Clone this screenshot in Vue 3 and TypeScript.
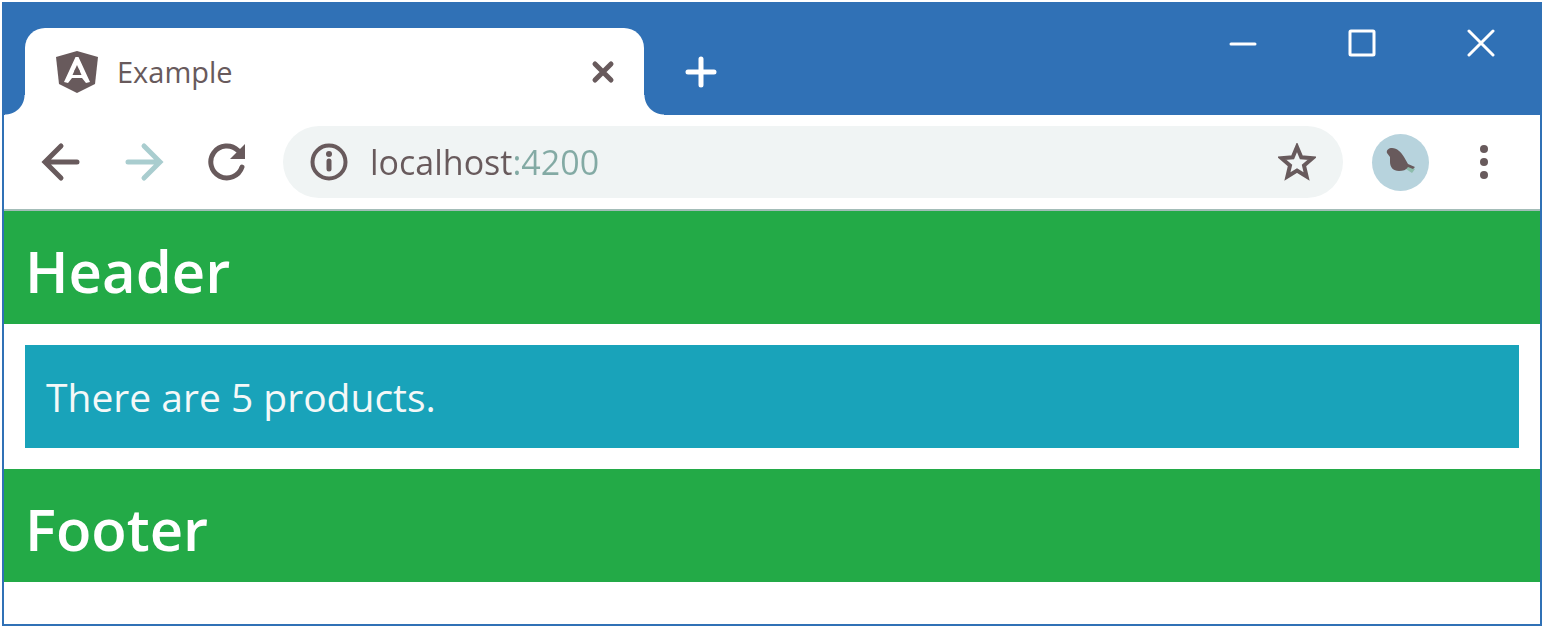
<script setup lang="ts">
import { ref } from 'vue'

const tabTitle = ref('Example')
const address = ref('localhost:4200')
const productCount = ref(5)
</script>

<template>
  <div class="desktop">
    <div class="window">
      <header class="titlebar">
        <div class="tab">
          <svg class="logo" viewBox="0 0 44 44" aria-hidden="true">
            <path class="shield" d="M22 1 43 7 40 34 22 43 4 34 1 7Z" />
            <path class="mark" fill-rule="evenodd" d="M20.500 7H23.500L35 32L31 33L27 28H17L13 33L9 32ZM22 15 17.500 25H26.500Z" />
            <circle class="shield" cx="22" cy="21" r="2.500" />
          </svg>
          <span class="tab-title">{{ tabTitle }}</span>
          <button class="icon-button" type="button" aria-label="Close tab">
            <svg class="close" viewBox="0 0 24 24"><path d="M4 4 20 20M20 4 4 20" /></svg>
          </button>
        </div>
        <button class="icon-button new-tab" type="button" aria-label="New tab">
          <svg class="plus" viewBox="0 0 32 32"><path d="M16 3V29M3 16H29" /></svg>
        </button>
        <div class="controls">
          <button class="icon-button control" type="button" aria-label="Minimize">
            <svg viewBox="0 0 28 28"><path d="M2 15H26" /></svg>
          </button>
          <button class="icon-button control" type="button" aria-label="Maximize">
            <svg viewBox="0 0 28 28"><rect x="2" y="2" width="24" height="24" rx="1" /></svg>
          </button>
          <button class="icon-button control" type="button" aria-label="Close window">
            <svg viewBox="0 0 28 28"><path d="M2 2 26 26M26 2 2 26" /></svg>
          </button>
        </div>
      </header>

      <nav class="toolbar">
        <button class="icon-button nav-button" type="button" aria-label="Back">
          <svg viewBox="0 0 40 40"><path d="M36 20H6M20 4 4 20 20 36" /></svg>
        </button>
        <button class="icon-button nav-button forward" type="button" aria-label="Forward">
          <svg viewBox="0 0 40 40"><path d="M4 20H34M20 4 36 20 20 36" /></svg>
        </button>
        <button class="icon-button nav-button" type="button" aria-label="Reload">
          <svg viewBox="0 0 40 40">
            <path d="M35 25A16 16 0 1 1 31 8.500" />
            <path class="solid" d="M38 2V17H23Z" />
          </svg>
        </button>
        <div class="address">
          <button class="icon-button" type="button" aria-label="Site information">
            <svg class="info-icon" viewBox="0 0 38 38">
              <circle cx="19" cy="19" r="16.500" />
              <path class="stem" d="M19 18V26" />
              <circle class="solid" cx="19" cy="11" r="3" />
            </svg>
          </button>
          <input v-model="address" class="url" type="text" aria-label="Address" spellcheck="false" />
          <button class="icon-button" type="button" aria-label="Bookmark this page">
            <svg class="star" viewBox="0 0 38 38">
              <path d="M19 4 23.300 14.300 34.500 15.200 26 22.500 28.600 33.500 19 27.600 9.400 33.500 12 22.500 3.500 15.200 14.700 14.300Z" />
            </svg>
          </button>
        </div>
        <button class="icon-button avatar" type="button" aria-label="Profile">
          <svg viewBox="0 0 57 57">
            <path class="twig" d="M35 31 43 35 40 39 34 35Z" />
            <path class="bird" d="M15 19C14 16 17 14 20 14C25 14 29 18 32 23L36 30L43 33L41 35L36 33C34 36 31 37 27 37C21 37 18 33 18 28V23Z" />
          </svg>
        </button>
        <button class="icon-button menu" type="button" aria-label="Menu">
          <svg viewBox="0 0 12 36">
            <circle cx="6" cy="5" r="4" />
            <circle cx="6" cy="18" r="4" />
            <circle cx="6" cy="31" r="4" />
          </svg>
        </button>
      </nav>

      <main class="page">
        <h1 class="band">Header</h1>
        <p class="notice">There are {{ productCount }} products.</p>
        <h1 class="band">Footer</h1>
      </main>
    </div>
  </div>
</template>

<style>
body {
  margin: 0;
  background: #fff;
}
</style>

<style scoped>
* {
  box-sizing: border-box;
}

.desktop {
  display: flex;
  min-height: 100vh;
  padding: 2px;
  font-family: "Open Sans", "Noto Sans", sans-serif;
}

.window {
  flex: 1;
  min-width: 0;
  border: 2px solid #3071b6;
  background: #fff;
}

svg {
  display: block;
  fill: none;
  stroke: currentColor;
  stroke-linecap: round;
}

.icon-button {
  display: flex;
  flex: none;
  align-items: center;
  justify-content: center;
  padding: 0;
  border: 0;
  background: none;
  color: #685a5c;
}

.titlebar {
  display: flex;
  padding-left: 21px;
  background: #3071b6;
  color: #fff;
}

.tab {
  position: relative;
  display: flex;
  flex: 0 1 619px;
  align-items: center;
  height: 87px;
  margin-top: 24px;
  padding: 0 29px 0 30px;
  border-radius: 20px 20px 0 0;
  background: #fff;
}

.tab::before,
.tab::after {
  position: absolute;
  bottom: 0;
  width: 20px;
  height: 20px;
  content: "";
}

.tab::before {
  right: 100%;
  background: radial-gradient(circle at 0 0, transparent 19px, #fff 20px);
}

.tab::after {
  left: 100%;
  background: radial-gradient(circle at 100% 0, transparent 19px, #fff 20px);
}

.logo {
  width: 44px;
  height: 44px;
  stroke: none;
}

.shield {
  fill: #685a5c;
}

.mark {
  fill: #fff;
}

.tab-title {
  flex: 1;
  margin-left: 18px;
  color: #685a5c;
  font-size: 29px;
  line-height: 40px;
}

.close {
  width: 24px;
  height: 24px;
  stroke-width: 5;
}

.new-tab {
  width: 32px;
  margin: 24px 0 0 41px;
  color: #fff;
}

.plus {
  width: 32px;
  height: 32px;
  stroke-width: 5;
}

.controls {
  display: flex;
  margin-left: auto;
}

.control {
  width: 119px;
  height: 78px;
  color: #fff;
}

.control svg {
  width: 28px;
  height: 28px;
  stroke-width: 3;
}

.toolbar {
  display: flex;
  align-items: center;
  height: 96px;
  padding: 0 50px 0 37px;
  border-bottom: 2px solid #a3bdb8;
}

.nav-button {
  margin-right: 43px;
}

.nav-button svg {
  width: 40px;
  height: 40px;
  stroke-width: 5;
}

.forward {
  color: #a9cdcf;
}

.solid {
  fill: currentColor;
  stroke: none;
}

.address {
  display: flex;
  flex: 1;
  align-items: center;
  min-width: 0;
  height: 72px;
  margin-left: -7px;
  padding: 0 27px;
  border-radius: 36px;
  background: #f0f4f4;
}

.info-icon,
.star {
  width: 38px;
  height: 38px;
  stroke-width: 4;
}

.info-icon .stem {
  stroke-width: 5;
}

.url {
  flex: 1;
  min-width: 0;
  height: 48px;
  margin: 0 22px;
  padding: 0;
  border: 0;
  outline: 0;
  background: linear-gradient(90deg, #685a5c 142px, #83aaa4 142px);
  background-clip: text;
  color: transparent;
  font-family: inherit;
  font-size: 34px;
}

.avatar {
  width: 57px;
  height: 57px;
  margin: 0 49px 0 29px;
  border-radius: 50%;
  background: #b7d3dd;
}

.avatar svg {
  width: 57px;
  height: 57px;
  stroke: none;
}

.bird {
  fill: #685a5c;
}

.twig {
  fill: #8dbcac;
}

.menu svg {
  width: 12px;
  height: 36px;
  fill: currentColor;
  stroke: none;
}

.band {
  margin: 0;
  padding: 19px 21px 13px;
  background: #23aa47;
  color: #fff;
  font-size: 58px;
  font-weight: 600;
  line-height: 81px;
}

.notice {
  margin: 21px;
  padding: 21px;
  background: #19a3ba;
  color: #f4f8f8;
  font-size: 39px;
  line-height: 61px;
}
</style>
